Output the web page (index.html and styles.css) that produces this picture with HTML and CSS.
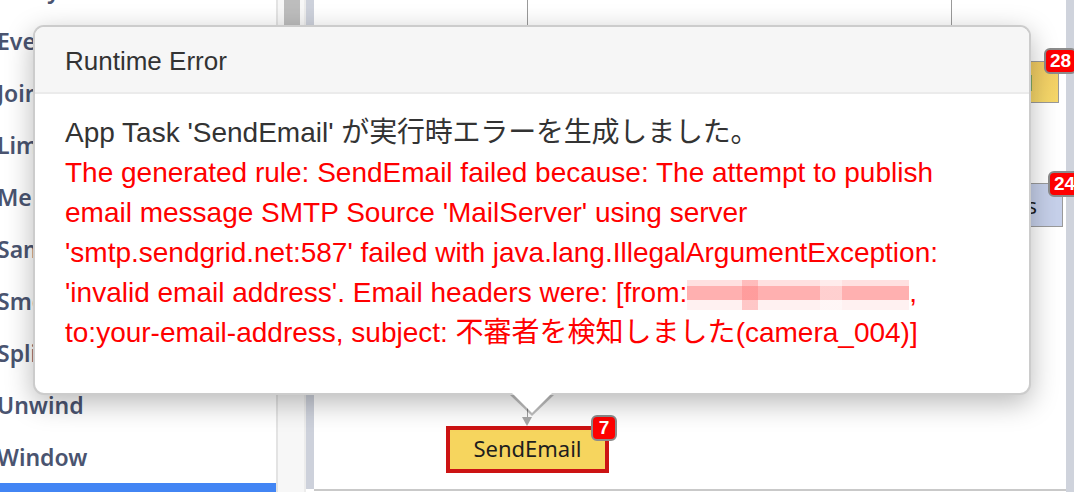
FILE: index.html
```html
<!DOCTYPE html>
<html lang="ja">
<head>
<meta charset="utf-8">
<title>Runtime Error</title>
<link rel="stylesheet" href="styles.css">
</head>
<body>
<div class="app">
  <aside class="sidebar">
    <ul class="ops">
      <li>Delay</li>
      <li>Event</li>
      <li>Join</li>
      <li>Limit</li>
      <li>Merge</li>
      <li>Sample</li>
      <li>Smooth</li>
      <li>Split</li>
      <li>Unwind</li>
      <li>Window</li>
      <li class="active">Custom</li>
    </ul>
  </aside>
  <div class="scrollcol"><div class="thumb"></div></div>
  <div class="vscroll"></div>
  <main class="canvas">
    <div class="edge edge-a"></div>
    <div class="edge edge-b"></div>
    <div class="node node-yellow node-top"><span>Upload</span></div>
    <div class="badge badge-28">28</div>
    <div class="node node-blue"><span>Events</span></div>
    <div class="badge badge-24">24</div>
    <div class="link"></div>
    <div class="arrowhead"></div>
    <div class="node node-error"><span>SendEmail</span></div>
    <div class="badge badge-7">7</div>
  </main>
  <div class="rstrip"></div>

  <div class="popover">
    <div class="popover-title">Runtime Error</div>
    <div class="popover-content">
      <div class="msg">App Task 'SendEmail' <span class="ja ja1">が実行時エラーを生成しました。</span></div>
      <div class="err">The generated rule: SendEmail failed because: The attempt to publish<br>email message SMTP Source 'MailServer' using server<br>'smtp.sendgrid.net:587' failed with java.lang.IllegalArgumentException:<br>'invalid email address'. Email headers were: [from:<span class="redact"></span>,<br>to:your-email-address, subject: <span class="ja">不審者を検知しました</span>(camera_004)]</div>
    </div>
    <div class="arrow"></div>
  </div>
</div>
</body>
</html>
```

FILE: styles.css
```css
html, body {
  margin: 0;
  padding: 0;
  background: #fff;
}
body {
  width: 1074px;
  height: 492px;
  overflow: hidden;
}
.app {
  position: relative;
  display: flex;
  height: 492px;
}
.sidebar {
  width: 276px;
  flex: none;
  border-right: 2px solid #e3e3e3;
  background: #fff;
  overflow: hidden;
}
.ops {
  list-style: none;
  margin: -37px 0 0 0;
  padding: 0;
  font-family: "Noto Sans", sans-serif;
  font-weight: 600;
  font-size: 23px;
  color: #4a5470;
}
.ops li {
  height: 52px;
  line-height: 52px;
  text-indent: -3px;
  white-space: nowrap;
}
.ops li.active {
  background: #4285f4;
  color: #fff;
}
.scrollcol {
  width: 28px;
  flex: none;
  background: #f7f7f7;
  border-right: 2px solid #ececec;
  box-sizing: border-box;
}
.thumb {
  margin-left: 6px;
  width: 16px;
  height: 220px;
  background: #bdbdbd;
}
.vscroll {
  width: 8px;
  flex: none;
  background: #cdd1db;
  height: 489px;
}
.canvas {
  position: relative;
  width: 752px;
  flex: none;
  height: 489px;
  border-bottom: 2px solid #c9c9c9;
  background: #fff;
}
.rstrip {
  width: 8px;
  flex: none;
  background: #cfd3dc;
}
.edge {
  position: absolute;
  top: 0;
  width: 1px;
  height: 40px;
  background: #9a9a9a;
}
.edge-a { left: 213px; }
.edge-b { left: 637px; }
.node {
  position: absolute;
  box-sizing: border-box;
  font-family: "Noto Sans", sans-serif;
  font-size: 22px;
  color: #1e1e1e;
  display: flex;
  align-items: center;
}
.node-top {
  left: 560px;
  top: 61px;
  width: 185px;
  height: 42px;
  border: 1px solid #9a9a9a;
  background: linear-gradient(#f2cc63, #f6d86a);
  justify-content: flex-end;
  padding-right: 25px;
}
.node-blue {
  left: 560px;
  top: 183px;
  width: 189px;
  height: 44px;
  border: 1px solid #9a9a9a;
  background: #c6d0ea;
  justify-content: flex-end;
  padding-right: 25px;
}
.node-error {
  left: 132px;
  top: 426px;
  width: 163px;
  height: 47px;
  border: 4px solid #cc1313;
  background: #f6d55e;
  justify-content: center;
  padding-bottom: 3px;
}
.badge {
  position: absolute;
  z-index: 2;
  box-sizing: border-box;
  height: 26px;
  min-width: 26px;
  padding: 0 4px;
  border: 2px solid #8c8c8c;
  border-radius: 6px;
  background: #ff0000;
  color: #fff;
  font-family: "Liberation Sans", sans-serif;
  font-weight: 700;
  font-size: 19px;
  line-height: 22px;
  text-align: center;
}
.badge-7 { left: 277px; top: 415px; }
.badge-28 { left: 730px; top: 48px; }
.badge-24 { left: 734px; top: 171px; }
.link {
  position: absolute;
  left: 213px;
  top: 398px;
  width: 1px;
  height: 20px;
  background: #a0a0a0;
}
.arrowhead {
  position: absolute;
  left: 208px;
  top: 417px;
  width: 0;
  height: 0;
  border-left: 5.5px solid transparent;
  border-right: 5.5px solid transparent;
  border-top: 9px solid #a8a8a8;
}

/* popover */
.popover {
  position: absolute;
  z-index: 5;
  left: 33px;
  top: 25px;
  width: 998px;
  box-sizing: border-box;
  background: #fff;
  border: 2px solid rgba(0, 0, 0, 0.2);
  border-radius: 11px;
  box-shadow: 0 8px 28px rgba(0, 0, 0, 0.28);
  font-family: "Liberation Sans", "Noto Sans CJK JP", sans-serif;
}
.popover-title {
  padding: 16px 30px 13px;
  font-size: 26px;
  line-height: 36px;
  color: #333;
  background: #f6f6f6;
  border-bottom: 2px solid #ebebeb;
  border-radius: 9px 9px 0 0;
}
.popover-content {
  padding: 19px 30px 40px;
  font-size: 28px;
  line-height: 40px;
  white-space: nowrap;
}
.msg { color: #333; }
.err { color: #ff0000; }
.ja {
  font-family: "Noto Sans CJK JP", sans-serif;
  line-height: 28px;
}
.ja1 {
  letter-spacing: -0.2px;
}
.redact {
  display: inline-block;
  width: 222px;
  height: 30px;
  vertical-align: -8px;
  background:
    linear-gradient(90deg, rgba(255,255,255,0) 0 25%, rgba(255,120,120,0.35) 25% 32%, rgba(255,255,255,0) 32% 60%, rgba(255,255,255,0.4) 60% 70%, rgba(255,255,255,0) 70%),
    linear-gradient(#ffe0e0 0 20%, #ffb0b0 20% 66%, #fff1f1 66%);
}
.arrow {
  position: absolute;
  left: 475px;
  bottom: -23px;
  width: 0;
  height: 0;
  border-left: 22px solid transparent;
  border-right: 22px solid transparent;
  border-top: 21px solid rgba(0, 0, 0, 0.25);
}
.arrow::after {
  content: "";
  position: absolute;
  left: -20px;
  top: -23px;
  border-left: 20px solid transparent;
  border-right: 20px solid transparent;
  border-top: 20px solid #fff;
}
```
